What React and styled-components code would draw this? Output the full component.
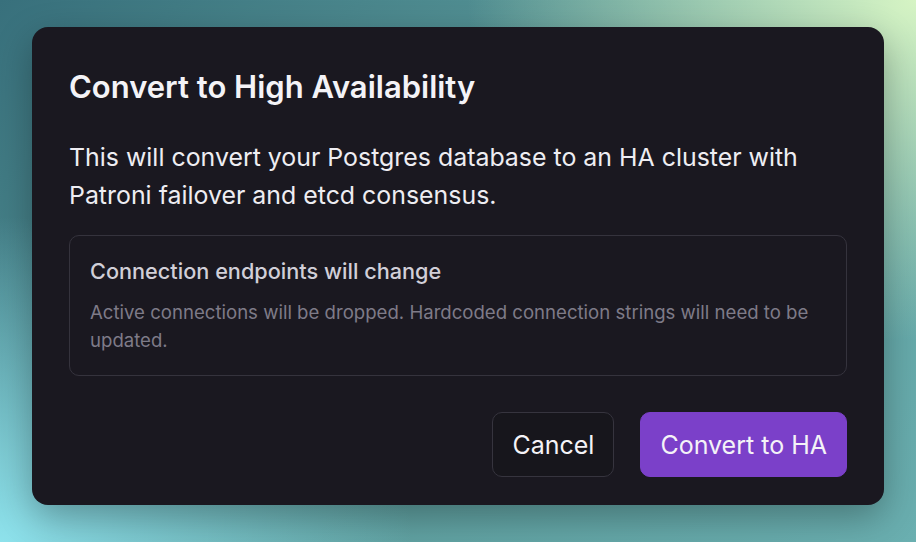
import React from 'react';
import styled, {createGlobalStyle} from 'styled-components';

const GlobalStyle = createGlobalStyle`
  html, body, #root { margin: 0; padding: 0; height: 100%; }
  body {
    font-family: Inter, "Noto Sans", sans-serif;
    background: #5aa3a6;
  }
`;

const Backdrop = styled.div`
  width: 916px;
  height: 542px;
  box-sizing: border-box;
  padding: 27px 32px 37px;
  background:
    radial-gradient(ellipse 70% 90% at 100% 0%, rgba(214, 244, 196, 1) 0%, rgba(214, 244, 196, 0) 70%),
    radial-gradient(ellipse 60% 80% at 0% 100%, rgba(142, 226, 236, 1) 0%, rgba(142, 226, 236, 0) 75%),
    linear-gradient(135deg, #38707c 0%, #5c9c9c 50%, #6aafb0 100%);
`;

const Dialog = styled.div`
  height: 100%;
  box-sizing: border-box;
  background: #1a1820;
  border-radius: 16px;
  padding: 28px 37px 28px;
  display: flex;
  flex-direction: column;
  box-shadow: 0 12px 36px rgba(0, 0, 0, 0.3);
`;

const Title = styled.h2`
  margin: 0;
  font-size: 31px;
  font-weight: 600;
  color: #f4f3f7;
  line-height: 64px;
`;

const Lead = styled.p`
  margin: 19px 0 0;
  font-size: 24.9px;
  line-height: 38px;
  color: #eeedf2;
`;

const Notice = styled.div`
  margin-top: 21px;
  border: 1px solid #35333d;
  border-radius: 10px;
  padding: 19px 20px 21px;
`;

const NoticeTitle = styled.div`
  font-size: 21.7px;
  font-weight: 500;
  color: #d1cfd8;
  line-height: 32px;
`;

const NoticeText = styled.div`
  margin-top: 11px;
  font-size: 18.6px;
  line-height: 28px;
  color: #7e7b88;
`;

const Actions = styled.div`
  margin-top: auto;
  display: flex;
  justify-content: flex-end;
  gap: 26px;
`;

const Button = styled.button`
  height: 65px;
  padding: 0 19px;
  border-radius: 10px;
  font-family: inherit;
  font-size: 25px;
  font-weight: 400;
  color: #f4f3f7;
  cursor: pointer;
  border: 1px solid ${p => (p.$primary ? '#7b40c9' : '#36343e')};
  background: ${p => (p.$primary ? '#7b40c9' : '#17161c')};
`;

export default function App() {
    return (
        <>
            <GlobalStyle/>
            <Backdrop>
                <Dialog>
                    <Title>Convert to High Availability</Title>
                    <Lead>
                        This will convert your Postgres database to an HA cluster with Patroni failover and etcd consensus.
                    </Lead>
                    <Notice>
                        <NoticeTitle>Connection endpoints will change</NoticeTitle>
                        <NoticeText>
                            Active connections will be dropped. Hardcoded connection strings will need to be updated.
                        </NoticeText>
                    </Notice>
                    <Actions>
                        <Button>Cancel</Button>
                        <Button $primary>Convert to HA</Button>
                    </Actions>
                </Dialog>
            </Backdrop>
        </>
    );
}
